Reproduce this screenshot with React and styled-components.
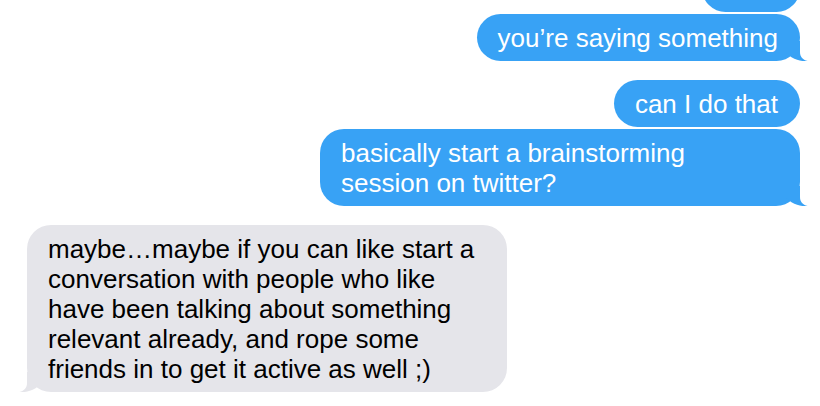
import React from 'react';
import styled, { createGlobalStyle, css } from 'styled-components';

const GlobalStyle = createGlobalStyle`
  html, body {
    margin: 0;
    padding: 0;
    background: #fff;
  }
  body {
    font-family: 'Liberation Sans', Arial, sans-serif;
  }
`;

const BLUE = '#38a2f5';
const GREY = '#e5e5ea';

// each group is a run of bubbles from one sender; the last one gets the tail
const groups = [
  { from: 'me', items: ['what', 'you’re saying something'] },
  { from: 'me', items: ['can I do that', 'basically start a brainstorming session on twitter?'] },
  {
    from: 'them',
    items: [
      'maybe…maybe if you can like start a conversation with people who like have been talking about something relevant already, and rope some friends in to get it active as well ;)',
    ],
  },
];

const Tail = ({ color, side }) => (
  <TailSvg side={side} width='22' height='20' viewBox='0 0 22 20'>
    <path
      d='M14 0 L14 11 C14 15.5 16.5 18.8 21.6 20 C17 20.6 11.5 19.6 5.5 16.3 L0 12 L0 0 Z'
      fill={color}
    />
  </TailSvg>
);

const App = () => {
  return (
    <>
      <GlobalStyle />
      <Thread>
        {groups.map((group, i) => (
          <Group key={i} from={group.from}>
            {group.items.map((text, j) => (
              <Bubble key={j} from={group.from}>
                {text}
                {j === group.items.length - 1 && (
                  <Tail
                    color={group.from === 'me' ? BLUE : GREY}
                    side={group.from === 'me' ? 'right' : 'left'}
                  />
                )}
              </Bubble>
            ))}
          </Group>
        ))}
      </Thread>
    </>
  );
};

export default App;

const Thread = styled.div`
  height: 406px;
  overflow: hidden;
  box-sizing: border-box;
  display: flex;
  flex-direction: column;
  justify-content: flex-end;
  gap: 19px;
  padding: 0 20px 14px 27px;
`;

const Group = styled.div`
  display: flex;
  flex-direction: column;
  gap: 2px;
  align-items: ${({ from }) => (from === 'me' ? 'flex-end' : 'flex-start')};
`;

const Bubble = styled.div`
  position: relative;
  box-sizing: border-box;
  max-width: 480px;
  padding: 9px 22px 8px 21px;
  border-radius: 24px;
  font-size: 26px;
  line-height: 30px;
  ${({ from }) =>
    from === 'me'
      ? css`
          background: ${BLUE};
          color: #fff;
        `
      : css`
          background: ${GREY};
          color: #000;
        `}
`;

const TailSvg = styled.svg`
  position: absolute;
  bottom: 0;
  display: block;
  ${({ side }) =>
    side === 'right'
      ? css`
          right: -8px;
        `
      : css`
          left: -8px;
          transform: scaleX(-1);
        `}
`;
